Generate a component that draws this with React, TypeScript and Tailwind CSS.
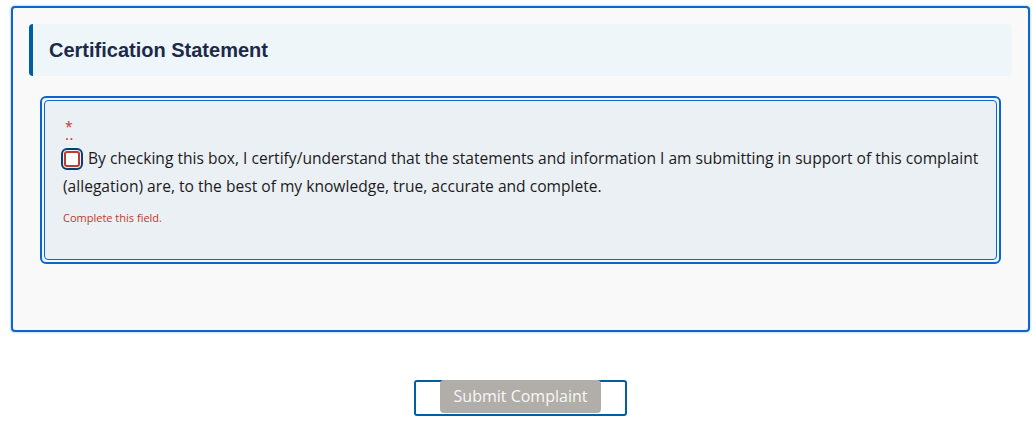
export default function App() {
	return (
		<div className="w-[1032px] h-[424px] bg-white font-['Open_Sans',sans-serif]">
			<div className="ml-[11px] w-[1019px]">
				<section className="mt-[6px] rounded-[4px] border-2 border-[#0a66cc] bg-[#f9f9f9] px-[16px] pt-[16px] pb-[66px] shadow-[0_0_2px_1px_rgba(10,102,204,0.2)]">
					<div className="flex h-[52px] items-center rounded-[4px] border-l-[4px] border-[#005ea2] bg-[#eff6fa] pl-[16px]">
						<h2 className="font-['Liberation_Sans',Arial,sans-serif] text-[20px] font-bold text-[#1b2a4a]">
							Certification Statement
						</h2>
					</div>
					<div className="mx-[11px] mt-[20px] rounded-[6px] border-2 border-[#0a66cc] bg-[#f4f7fa] p-[2px]">
						<div className="rounded-[4px] border-[1.5px] border-[#0a66cc] bg-[#ebf0f5] pl-[18px] pr-[12px] pt-[19px] pb-[32px]">
							<div className="flex flex-col items-start pl-[2px] text-[#c0392b]">
								<span className="h-[11px] text-[14px] leading-[14px]">*</span>
								<span className="mt-[1px] h-[8px] text-[15px] leading-[4px] tracking-[0.5px]">..</span>
							</div>
							<div className="mt-[4px] text-[15.6px] leading-[28px] text-[#1b1b1b]">
								<span className="ml-[1px] mr-[8px] inline-block h-[16px] w-[16px] translate-y-[3px] rounded-[3px] border-2 border-[#c0392b] bg-white outline-2 outline-offset-[1px] outline-[#0b3f75]" />
								By checking this box, I certify/understand that the statements and information I am submitting in support of this complaint (allegation) are, to the best of my knowledge, true, accurate and complete.
							</div>
							<p className="mt-[10px] text-[11px] text-[#c0392b]">Complete this field.</p>
						</div>
					</div>
				</section>
				<div className="mt-[48px] flex justify-center">
					<div className="flex h-[36px] w-[213px] justify-center rounded-[3px] border-2 border-[#005ea2] bg-white">
						<button className="-mt-[2px] h-[33px] w-[161px] rounded-[4px] bg-[#b1aeaa] text-[16px] text-[#f7f7f7]">
							Submit Complaint
						</button>
					</div>
				</div>
			</div>
		</div>
	);
}
